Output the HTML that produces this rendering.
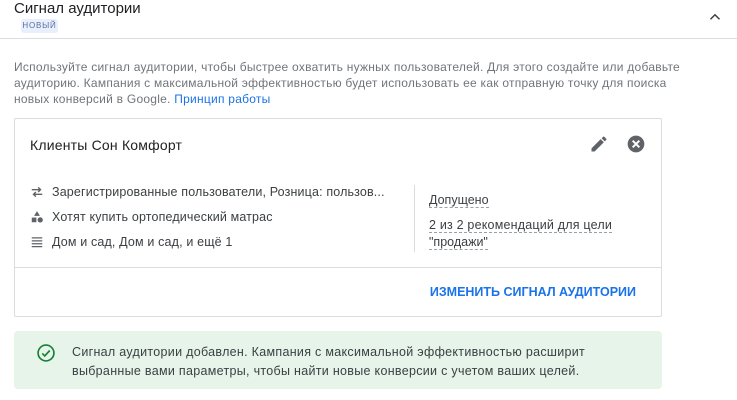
<!DOCTYPE html><html><head><meta charset="utf-8"><style>
body{margin:0;width:737px;height:400px;background:#fff;font-family:"Liberation Sans",sans-serif;position:relative;overflow:hidden;color:#3c4043}
.a{position:absolute}
.d{border-bottom:1px dashed #9aa0a6}
</style></head><body>
<div class="a" style="left:14px;top:0px;font-size:15px;color:#202124">Сигнал аудитории</div>
<div class="a" style="left:21px;top:19px;width:37px;height:14px;background:#e8f0fe;border-radius:3px;font-size:8px;letter-spacing:.8px;color:#5f6c99;text-align:center;line-height:14px">НОВЫЙ</div>
<svg class="a" style="left:706px;top:8px" width="18" height="18" viewBox="0 0 24 24"><path d="M6 15l6-6 6 6" fill="none" stroke="#3c4043" stroke-width="2"/></svg>
<div class="a" style="left:0;top:38px;width:737px;height:1px;background:#dadce0"></div>
<div class="a" style="left:14px;top:59px;width:670px;font-size:12px;line-height:16px;color:#70757a;letter-spacing:.25px">Используйте сигнал аудитории, чтобы быстрее охватить нужных пользователей. Для этого создайте или добавьте аудиторию. Кампания с максимальной эффективностью будет использовать ее как отправную точку для поиска новых конверсий в Google. <span style="color:#1a73e8">Принцип работы</span></div>
<div class="a" style="left:14px;top:118px;width:646px;height:197px;border:1px solid #dadce0;border-radius:2px"></div>
<div class="a" style="left:30px;top:137px;font-size:14px;color:#202124;letter-spacing:.2px">Клиенты Сон Комфорт</div>
<svg class="a" style="left:589px;top:134px" width="20" height="20" viewBox="0 0 24 24"><path d="M3 17.25V21h3.75L17.8 9.94l-3.75-3.75L3 17.25zM20.7 7.04a1 1 0 000-1.41l-2.34-2.34a1 1 0 00-1.41 0l-1.83 1.83 3.75 3.75 1.83-1.83z" fill="#5f6368"/></svg>
<svg class="a" style="left:626px;top:134px" width="20" height="20" viewBox="0 0 24 24"><circle cx="12" cy="12" r="10" fill="#5f6368"/><path d="M8 8l8 8M16 8l-8 8" stroke="#fff" stroke-width="2.4"/></svg>
<svg class="a" style="left:30px;top:185px" width="14" height="14" viewBox="0 0 24 24"><path d="M3 8h15M14 4l4 4-4 4M21 16H6M10 12l-4 4 4 4" fill="none" stroke="#5f6368" stroke-width="2.4"/></svg>
<svg class="a" style="left:30px;top:210px" width="14" height="14" viewBox="0 0 24 24"><path d="M12 2l5 8H7z" fill="#5f6368"/><rect x="3" y="13" width="8" height="8" fill="#5f6368"/><circle cx="17.5" cy="17" r="4.5" fill="#5f6368"/></svg>
<svg class="a" style="left:30px;top:235px" width="14" height="14" viewBox="0 0 24 24"><path d="M3 5h18M3 10h18M3 15h18M3 20h18" stroke="#5f6368" stroke-width="2.2"/></svg>
<div class="a" style="left:52px;top:185px;font-size:12.5px;line-height:14px;width:355px;white-space:nowrap;overflow:hidden;letter-spacing:.15px">Зарегистрированные пользователи, Розница: пользов...</div>
<div class="a" style="left:52px;top:210px;font-size:12.5px;line-height:14px;letter-spacing:.15px">Хотят купить ортопедический матрас</div>
<div class="a" style="left:52px;top:235px;font-size:12.5px;line-height:14px;letter-spacing:.15px">Дом и сад, Дом и сад, и ещё 1</div>
<div class="a" style="left:414px;top:185px;width:1px;height:67px;background:#dadce0"></div>
<div class="a" style="left:429px;top:193px;font-size:12.5px;line-height:14px"><span class="d">Допущено</span></div>
<div class="a" style="left:429px;top:218px;font-size:12.5px;line-height:14px;letter-spacing:.2px"><span class="d">2 из 2 рекомендаций для цели</span></div>
<div class="a" style="left:429px;top:235px;font-size:12.5px;line-height:14px"><span class="d">"продажи"</span></div>
<div class="a" style="left:14px;top:267px;width:648px;height:1px;background:#dadce0"></div>
<div class="a" style="right:101px;top:285px;font-size:12.5px;font-weight:bold;letter-spacing:0;color:#1a73e8">ИЗМЕНИТЬ СИГНАЛ АУДИТОРИИ</div>
<div class="a" style="left:14px;top:331px;width:648px;height:58px;background:#e6f4ea;border-radius:4px"></div>
<svg class="a" style="left:36px;top:343px" width="20" height="20" viewBox="0 0 24 24"><circle cx="12" cy="12" r="9.5" fill="none" stroke="#188038" stroke-width="2"/><path d="M7.5 12.5l3 3 6-6.5" fill="none" stroke="#188038" stroke-width="2"/></svg>
<div class="a" style="left:72px;top:343px;font-size:12.5px;line-height:19px;color:#3c4043;width:580px;letter-spacing:.3px">Сигнал аудитории добавлен. Кампания с максимальной эффективностью расширит<br>выбранные вами параметры, чтобы найти новые конверсии с учетом ваших целей.</div>
</body></html>
